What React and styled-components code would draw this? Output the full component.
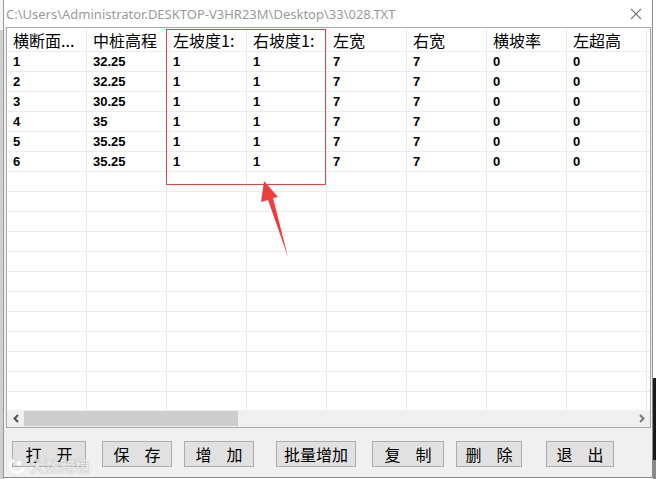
import React from 'react';
import styled, { createGlobalStyle } from 'styled-components';

const GlobalStyle = createGlobalStyle`
  html, body {
    margin: 0;
    padding: 0;
    background: #ffffff;
  }
`;

const COLS = ['横断面...', '中桩高程', '左坡度1:', '右坡度1:', '左宽', '右宽', '横坡率', '左超高'];
const DATA = [
  ['1', '32.25', '1', '1', '7', '7', '0', '0'],
  ['2', '32.25', '1', '1', '7', '7', '0', '0'],
  ['3', '30.25', '1', '1', '7', '7', '0', '0'],
  ['4', '35', '1', '1', '7', '7', '0', '0'],
  ['5', '35.25', '1', '1', '7', '7', '0', '0'],
  ['6', '35.25', '1', '1', '7', '7', '0', '0'],
];
const EMPTY_ROWS = 12;

const BUTTONS = [
  { text: '打开', w: 74, gap: 16 },
  { text: '保存', w: 70, gap: 12 },
  { text: '增加', w: 70, gap: 22 },
  { text: '批量增加', w: 80, gap: 16, tight: true },
  { text: '复制', w: 72, gap: 12 },
  { text: '删除', w: 66, gap: 24 },
  { text: '退出', w: 68, gap: 0 },
];

//#region styles
const Desktop = styled.div`
  position: relative;
  display: flex;
  width: 656px;
  height: 479px;
  overflow: hidden;
  background: #ffffff;
`;

const LeftStrip = styled.div`
  width: 3px;
  flex: none;
  background: linear-gradient(#f4f4f4 0, #f4f4f4 30px, #cfcfcf 30px, #cfcfcf 100%);
  border-right: 1px solid #9a9a9a;
`;

const RightStrip = styled.div`
  flex: 1;
  background: linear-gradient(#ffffff 0, #ffffff 378px, #1a1a1a 378px, #1a1a1a 460px, #8a8a8a 460px);
`;

const Window = styled.div`
  width: 648px;
  flex: none;
  display: flex;
  flex-direction: column;
  background: #f0f0f0;
  border-right: 1px solid #8c8c8c;
  border-bottom: 1px solid #8c8c8c;
  height: 477px;
`;

const TitleBar = styled.div`
  height: 27px;
  flex: none;
  display: flex;
  align-items: center;
  justify-content: space-between;
  background: #ffffff;
  padding: 0 10px 0 2px;
  font-family: 'Noto Sans', 'Liberation Sans', sans-serif;
  font-size: 13px;
  color: #9a9a9a;
`;

const CloseGlyph = styled.svg`
  width: 12px;
  height: 12px;
`;

const Body = styled.div`
  flex: 1;
  display: flex;
  flex-direction: column;
  padding: 0 1px 0 2px;
`;

const GridBox = styled.div`
  height: 399px;
  flex: none;
  border: 1px solid #a8a8a8;
  background: #ffffff;
  display: flex;
  flex-direction: column;
  overflow: hidden;
`;

const GridView = styled.div`
  flex: 1;
  overflow: hidden;
`;

const Row = styled.div`
  display: grid;
  grid-template-columns: repeat(8, 80px) 1fr;
  height: ${(p) => (p.$header ? 24 : 20)}px;
  border-bottom: 1px solid #ececec;
  box-sizing: border-box;
`;

const Cell = styled.div`
  border-right: 1px solid #ececec;
  padding-left: 6px;
  display: flex;
  align-items: center;
  white-space: nowrap;
  overflow: hidden;
  color: #000000;
  font-family: ${(p) =>
    p.$header
      ? "'Noto Sans CJK SC', sans-serif"
      : "'Liberation Sans', Arial, sans-serif"};
  font-size: ${(p) => (p.$header ? 16 : 13)}px;
  font-weight: ${(p) => (p.$header ? 400 : 700)};
  padding-top: ${(p) => (p.$header ? 1 : 0)}px;
`;

const ScrollBar = styled.div`
  height: 17px;
  flex: none;
  display: flex;
  align-items: center;
  background: #f0f0f0;
`;

const ArrowBtn = styled.div`
  width: 17px;
  height: 17px;
  flex: none;
  display: flex;
  align-items: center;
  justify-content: center;
  color: ${(p) => (p.$dim ? '#7a7a7a' : '#505050')};
`;

const Track = styled.div`
  flex: 1;
  height: 17px;
  display: flex;
  align-items: center;
`;

const Thumb = styled.div`
  height: 15px;
  background: #cdcdcd;
`;

const ButtonRow = styled.div`
  flex: 1;
  display: flex;
  align-items: flex-start;
  padding: 13px 0 0 6px;
`;

const Button = styled.button`
  height: 26px;
  flex: none;
  box-sizing: border-box;
  border: 1px solid #adadad;
  background: #e1e1e1;
  padding: 0;
  display: flex;
  align-items: center;
  justify-content: center;
  gap: ${(p) => (p.$tight ? 0 : 15)}px;
  white-space: nowrap;
  font-family: 'Noto Sans CJK SC', sans-serif;
  font-size: 16px;
  color: #000000;
`;

const Callout = styled.div`
  position: absolute;
  left: 166px;
  top: 29px;
  width: 160px;
  height: 156px;
  border: 1px solid #d84a4a;
  box-sizing: border-box;
  pointer-events: none;
`;

const ArrowLayer = styled.svg`
  position: absolute;
  left: 0;
  top: 0;
  pointer-events: none;
`;

const Watermark = styled.div`
  position: absolute;
  left: 8px;
  top: 455px;
  display: flex;
  align-items: center;
  gap: 4px;
  font-family: 'Noto Sans CJK SC', sans-serif;
  font-size: 15px;
  font-weight: 700;
  color: rgba(255, 255, 255, 0.8);
  text-shadow: 0 0 1px rgba(110, 110, 110, 0.7);
  pointer-events: none;
`;
//#endregion

const Chevron = ({ dir }) => (
  <svg width="8" height="9" viewBox="0 0 8 9">
    <path
      d={dir === 'left' ? 'M6 1 L2.5 4.5 L6 8' : 'M2 1 L5.5 4.5 L2 8'}
      fill="none"
      stroke="currentColor"
      strokeWidth="2"
    />
  </svg>
);

const App = () => {
  return (
    <>
      <GlobalStyle />
      <Desktop>
        <LeftStrip />
        <Window>
          <TitleBar>
            <span>C:\Users\Administrator.DESKTOP-V3HR23M\Desktop\33\028.TXT</span>
            <CloseGlyph viewBox="0 0 12 12">
              <path d="M1 1 L11 11 M11 1 L1 11" stroke="#7a7a7a" strokeWidth="1.1" />
            </CloseGlyph>
          </TitleBar>
          <Body>
            <GridBox>
              <GridView>
                <Row $header>
                  {COLS.map((c) => (
                    <Cell key={c} $header>{c}</Cell>
                  ))}
                  <Cell $header />
                </Row>
                {DATA.map((r, i) => (
                  <Row key={i}>
                    {r.map((v, j) => (
                      <Cell key={j}>{v}</Cell>
                    ))}
                    <Cell />
                  </Row>
                ))}
                {Array.from({ length: EMPTY_ROWS }).map((_, i) => (
                  <Row key={'e' + i}>
                    {COLS.map((c) => (
                      <Cell key={c} />
                    ))}
                    <Cell />
                  </Row>
                ))}
              </GridView>
              <ScrollBar>
                <ArrowBtn>
                  <Chevron dir="left" />
                </ArrowBtn>
                <Track>
                  <Thumb style={{ width: 214 }} />
                </Track>
                <ArrowBtn $dim>
                  <Chevron dir="right" />
                </ArrowBtn>
              </ScrollBar>
            </GridBox>
            <ButtonRow>
              {BUTTONS.map((b) => (
                <Button
                  key={b.text}
                  $tight={b.tight}
                  style={{ width: b.w, marginRight: b.gap }}
                >
                  {b.tight ? b.text : b.text.split('').map((ch) => <span key={ch}>{ch}</span>)}
                </Button>
              ))}
            </ButtonRow>
          </Body>
        </Window>
        <RightStrip />

        <Callout />
        <ArrowLayer width="656" height="479" viewBox="0 0 656 479">
          <polygon
            points="264,181 278,197 273,198 288,257 268,200 261,202"
            fill="#f03c3c"
          />
        </ArrowLayer>
        <Watermark>
          <svg width="18" height="16" viewBox="0 0 18 16">
            <path
              d="M6 2 C1 4 1 12 7 14 C11 15 15 13 16 10"
              fill="none"
              stroke="rgba(255,255,255,0.85)"
              strokeWidth="2.5"
            />
            <circle cx="11" cy="5" r="2.5" fill="rgba(255,255,255,0.85)" />
          </svg>
          <span>大数跨境</span>
        </Watermark>
      </Desktop>
    </>
  );
};

export default App;
